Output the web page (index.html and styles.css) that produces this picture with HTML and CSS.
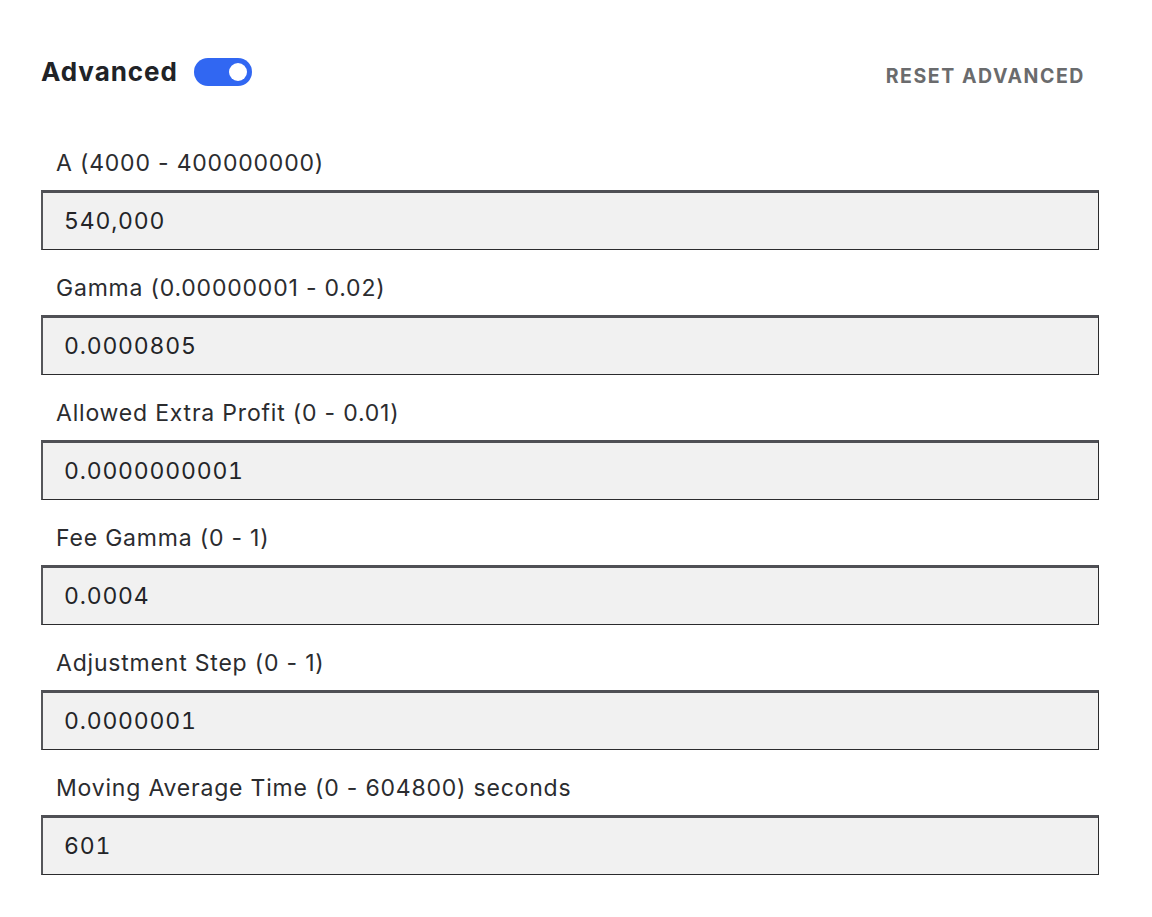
FILE: index.html
```html
<!DOCTYPE html>
<html lang="en">
<head>
<meta charset="utf-8">
<title>Advanced</title>
<link rel="stylesheet" href="styles.css">
</head>
<body>
<div class="panel">
  <div class="header">
    <div class="title-group">
      <h2 class="title">Advanced</h2>
      <span class="toggle"><span class="knob"></span></span>
    </div>
    <button class="reset">RESET ADVANCED</button>
  </div>
  <div class="fields">
    <div class="field">
      <label class="label">A (4000 - 400000000)</label>
      <div class="input">540,000</div>
    </div>
    <div class="field">
      <label class="label">Gamma (0.00000001 - 0.02)</label>
      <div class="input">0.0000805</div>
    </div>
    <div class="field">
      <label class="label">Allowed Extra Profit (0 - 0.01)</label>
      <div class="input">0.0000000001</div>
    </div>
    <div class="field">
      <label class="label">Fee Gamma (0 - 1)</label>
      <div class="input">0.0004</div>
    </div>
    <div class="field">
      <label class="label">Adjustment Step (0 - 1)</label>
      <div class="input">0.0000001</div>
    </div>
    <div class="field">
      <label class="label">Moving Average Time (0 - 604800) seconds</label>
      <div class="input">601</div>
    </div>
  </div>
</div>
</body>
</html>
```
FILE: styles.css
```css
* { box-sizing: border-box; }
body {
  margin: 0;
  background: #ffffff;
  font-family: Inter, "Noto Sans", sans-serif;
  color: #222326;
}
.panel {
  width: 1099px;
  padding: 57px 0 0 41px;
}
.header {
  display: flex;
  justify-content: space-between;
  align-items: center;
  height: 30px;
  margin-bottom: 61px;
}
.title-group {
  display: flex;
  align-items: center;
  gap: 16px;
}
.title {
  margin: 0;
  font-size: 26px;
  line-height: 30px;
  font-weight: 700;
  color: #212327;
  letter-spacing: 0.95px;
}
.toggle {
  display: flex;
  align-items: center;
  justify-content: flex-end;
  width: 58px;
  height: 28px;
  border-radius: 14px;
  background: #3167f2;
  padding-right: 5px;
}
.knob {
  width: 18px;
  height: 18px;
  border-radius: 50%;
  background: #ffffff;
}
.reset {
  margin: 8px 14px 0 0;
  padding: 0;
  border: 0;
  background: none;
  font-family: Inter, "Noto Sans", sans-serif;
  font-size: 19.5px;
  font-weight: 700;
  color: #6a6b6d;
  letter-spacing: 1.55px;
}
.fields {
  display: flex;
  flex-direction: column;
  gap: 23px;
}
.field {
  display: flex;
  flex-direction: column;
}
.label {
  display: block;
  font-size: 23px;
  line-height: 30px;
  padding-left: 15px;
  margin-bottom: 12px;
  color: #2b2c2f;
  letter-spacing: 0.8px;
}
.input {
  height: 60px;
  background: #f1f1f1;
  border-top: 3px solid #4f5055;
  border-left: 2px solid #55565a;
  border-right: 1px solid #2b2b2d;
  border-bottom: 1px solid #2b2b2d;
  padding-left: 21px;
  display: flex;
  align-items: center;
  font-size: 23px;
  font-variant-numeric: tabular-nums;
  letter-spacing: 0.8px;
  color: #232427;
}
```
